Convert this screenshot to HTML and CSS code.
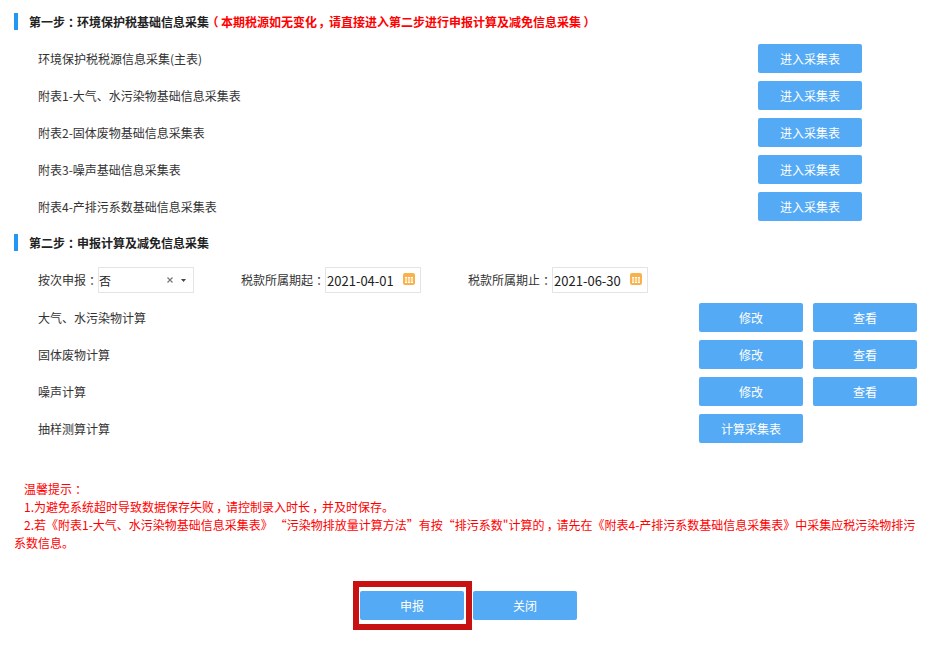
FILE: index.html
```html
<!DOCTYPE html>
<html lang="zh-CN">
<head>
<meta charset="utf-8">
<title>环境保护税</title>
<link rel="stylesheet" href="styles.css">
</head>
<body>
<main class="page">
  <h2 class="step step-one">第一步<span class="pn">：</span>环境保护税基础信息采集<span class="step-note"><span class="pn">（</span>本期税源如无变化<span class="pn">，</span>请直接进入第二步进行申报计算及减免信息采集<span class="pn">）</span></span></h2>
  <div class="rows">
    <div class="row"><span class="row-label">环境保护税税源信息采集(主表)</span><div class="row-actions row-actions-one"><button class="btn">进入采集表</button></div></div>
    <div class="row"><span class="row-label">附表1-大气、水污染物基础信息采集表</span><div class="row-actions row-actions-one"><button class="btn">进入采集表</button></div></div>
    <div class="row"><span class="row-label">附表2-固体废物基础信息采集表</span><div class="row-actions row-actions-one"><button class="btn">进入采集表</button></div></div>
    <div class="row"><span class="row-label">附表3-噪声基础信息采集表</span><div class="row-actions row-actions-one"><button class="btn">进入采集表</button></div></div>
    <div class="row"><span class="row-label">附表4-产排污系数基础信息采集表</span><div class="row-actions row-actions-one"><button class="btn">进入采集表</button></div></div>
  </div>

  <h2 class="step step-two">第二步<span class="pn">：</span>申报计算及减免信息采集</h2>
  <div class="filters">
    <label class="field field-select"><span class="field-label">按次申报<span class="pn">：</span></span>
      <span class="control select"><span class="control-text">否</span>
        <svg class="clear" width="6" height="6" viewBox="0 0 6 6"><path d="M.5.5l5 5M5.5.5l-5 5" stroke="#777" stroke-width="1.2" fill="none"/></svg>
        <svg class="caret" width="5" height="3" viewBox="0 0 5 3"><path d="M0 0h5L2.5 3z" fill="#444"/></svg>
      </span>
    </label>
    <label class="field field-start"><span class="field-label">税款所属期起<span class="pn">：</span></span>
      <span class="control date"><span class="control-text">2021-04-01</span>
        <svg class="cal" width="12" height="12" viewBox="0 0 12 12"><rect width="12" height="12" rx="2" fill="#f9b24a"/><rect x="2" y="4" width="8" height="6" fill="#fff"/><path d="M2 6h8M2 8h8M4.5 4v6M7.5 4v6" stroke="#f9b24a" stroke-width=".8"/></svg>
      </span>
    </label>
    <label class="field field-end"><span class="field-label">税款所属期止<span class="pn">：</span></span>
      <span class="control date"><span class="control-text">2021-06-30</span>
        <svg class="cal" width="12" height="12" viewBox="0 0 12 12"><rect width="12" height="12" rx="2" fill="#f9b24a"/><rect x="2" y="4" width="8" height="6" fill="#fff"/><path d="M2 6h8M2 8h8M4.5 4v6M7.5 4v6" stroke="#f9b24a" stroke-width=".8"/></svg>
      </span>
    </label>
  </div>
  <div class="rows">
    <div class="row"><span class="row-label">大气、水污染物计算</span><div class="row-actions"><button class="btn">修改</button><button class="btn">查看</button></div></div>
    <div class="row"><span class="row-label">固体废物计算</span><div class="row-actions"><button class="btn">修改</button><button class="btn">查看</button></div></div>
    <div class="row"><span class="row-label">噪声计算</span><div class="row-actions"><button class="btn">修改</button><button class="btn">查看</button></div></div>
    <div class="row"><span class="row-label">抽样测算计算</span><div class="row-actions"><button class="btn">计算采集表</button><span class="btn-spacer"></span></div></div>
  </div>

  <div class="notice">
    <p>温馨提示<span class="pn">：</span></p>
    <p>1.为避免系统超时导致数据保存失败<span class="pn">，</span>请控制录入时长<span class="pn">，</span>并及时保存。</p>
    <p>2.若《附表1-大气、水污染物基础信息采集表》<span class="quote-gap">“</span>污染物排放量计算方法”有按“排污系数"计算的<span class="pn">，</span>请先在《附表4-产排污系数基础信息采集表》中采集应税污染物排污<br>系数信息。</p>
  </div>

  <div class="footer">
    <span class="highlight"><button class="btn">申报</button></span>
    <button class="btn">关闭</button>
  </div>
</main>
</body>
</html>
```
FILE: styles.css
```css
* { box-sizing: border-box; }
html, body { margin: 0; padding: 0; background: #fff; }
body {
  font-family: "Noto Sans CJK SC", "Liberation Sans", sans-serif;
  font-size: 12px;
  color: #333;
  overflow: hidden;
}
.page { width: 928px; height: 647px; padding: 13px 11px 0 14px; }

.pn {
  display: inline-block;
  width: 12px;
  text-align: center;
  text-indent: 0;
  font-feature-settings: "palt";
}

.step {
  margin: 0;
  height: 17px;
  line-height: 17px;
  padding-left: 11px;
  border-left: 4px solid #2196f3;
  font-size: 12px;
  font-weight: 700;
  color: #222;
  white-space: nowrap;
}
.step-note { color: #f00; }
.step-two { margin-top: 13px; }

.rows { display: flex; flex-direction: column; gap: 8px; }
.step-one + .rows { margin-top: 14px; }
.row {
  display: flex;
  align-items: center;
  justify-content: space-between;
  height: 29px;
  padding-left: 24px;
}
.row-actions { display: flex; gap: 10px; }
.row-actions-one { margin-right: 55px; }

.btn {
  display: block;
  width: 104px;
  height: 29px;
  padding: 0;
  border: 0;
  border-radius: 2px;
  background: #55aaf5;
  color: #fff;
  font: inherit;
  font-size: 12px;
}
.btn-spacer { display: block; width: 104px; }

.filters {
  display: flex;
  height: 26px;
  margin-top: 16px;
  margin-bottom: 9px;
  padding-left: 24px;
}
.field { display: flex; align-items: center; }
.field-label { position: relative; top: -1px; }
.field-start { margin-left: 47px; }
.field-end { margin-left: 47px; }
.control {
  display: flex;
  align-items: center;
  width: 96px;
  height: 26px;
  border: 1px solid #e4e4e4;
  color: #222;
}
.control-text { flex: 1; font-size: 13px; }
.select .control-text { font-size: 12px; }
.date { padding-left: 1px; }
.clear { margin-right: 8px; }
.caret { margin-right: 7px; }
.cal { margin-right: 5px; margin-top: -2px; }

.filters + .rows { margin-top: 10px; }

.notice {
  margin-top: 37px;
  color: #f00;
  line-height: 18px;
}
.notice p { margin: 0; text-indent: 10px; }
.quote-gap { margin-left: 8px; }

.footer {
  display: flex;
  gap: 9px;
  margin-top: 39px;
  padding-left: 346px;
}
.highlight { position: relative; display: block; }
.highlight::after {
  content: "";
  position: absolute;
  inset: -10px -8px -10px -7px;
  border: 6px solid #c81212;
  pointer-events: none;
}
```
